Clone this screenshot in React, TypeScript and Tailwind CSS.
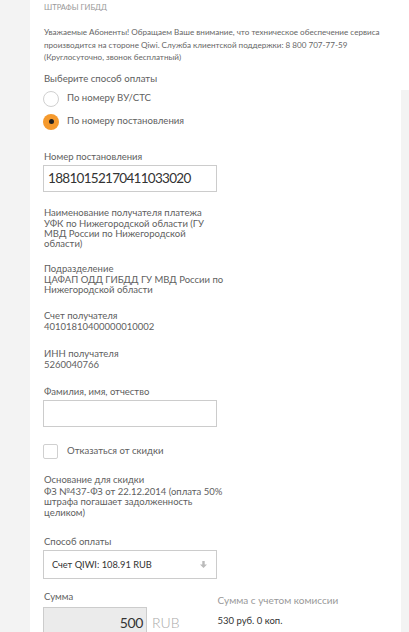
import React from 'react';

const font = { fontFamily: 'Lato, "Open Sans", sans-serif' };

const Field = ({ label, lines, lead = 'leading-[10px]', gap = 'mt-[1px]' }: { label: string; lines: string[]; lead?: string; gap?: string }) => (
  <div className="text-[9.5px] text-[#606060]">
    <div className="leading-[11px]">{label}</div>
    <div className={`${gap} ${lead} whitespace-nowrap`}>
      {lines.map((l) => (
        <div key={l}>{l}</div>
      ))}
    </div>
  </div>
);

export default function App() {
  return (
    <div className="flex h-[632px] w-[409px] overflow-hidden bg-[#f3f3f3]" style={font}>
      <div className="w-[30px] shrink-0" />
      <div className="flex flex-1 flex-col">
        <div className="bg-white pb-[4px] pl-[14px] pr-[19px]">
          <div className="text-[7.6px] uppercase leading-[14px] text-[#999]">Штрафы ГИБДД</div>
          <p className="mt-[12px] text-[8.1px] leading-[12.5px] text-[#666]">
            Уважаемые Абоненты! Обращаем Ваше внимание, что техническое обеспечение сервиса производится на стороне Qiwi. Служба клиентской поддержки: 8 800 707-77-59 (Круглосуточно, звонок бесплатный)
          </p>
          <div className="mt-[8px] text-[9.6px] leading-[14px] text-[#606060]">Выберите способ оплаты</div>
        </div>
        <div className="flex flex-1">
          <div className="flex-1 bg-white pl-[13px]">
            <div className="flex flex-col gap-[7px] pt-[1px]">
              <label className="flex h-[16px] items-center gap-[8px] text-[9.6px] text-[#606060]">
                <span className="h-[16px] w-[16px] rounded-full border border-[#d0d0d0] bg-white" />
                По номеру ВУ/СТС
              </label>
              <label className="flex h-[16px] items-center gap-[8px] text-[9.6px] text-[#606060]">
                <span className="flex h-[16px] w-[16px] items-center justify-center rounded-full bg-[#f59a2e]">
                  <span className="h-[5px] w-[5px] rounded-full bg-[#222]" />
                </span>
                По номеру постановления
              </label>
            </div>

            <div className="ml-[1px] mt-[21px] text-[9.5px] leading-[12px] text-[#606060]">Номер постановления</div>
            <div className="mt-[2px] flex h-[27px] w-[174px] items-center border border-[#ccc] pl-[4px] text-[13.5px] tracking-[-0.7px] text-[#333]">
              18810152170411033020
            </div>

            <div className="ml-[1px] mt-[15px]">
              <Field
                label="Наименование получателя платежа"
                lines={['УФК по Нижегородской области (ГУ', 'МВД России по Нижегородской', 'области)']}
              />
            </div>
            <div className="ml-[1px] mt-[14px]">
              <Field label="Подразделение" lines={['ЦАФАП ОДД ГИБДД ГУ МВД России по', 'Нижегородской области']} />
            </div>
            <div className="ml-[1px] mt-[15px]">
              <Field label="Счет получателя" lines={['40101810400000010002']} />
            </div>
            <div className="ml-[1px] mt-[16px]">
              <Field label="ИНН получателя" lines={['5260040766']} />
            </div>

            <div className="ml-[1px] mt-[16px] text-[9.5px] leading-[12px] text-[#606060]">Фамилия, имя, отчество</div>
            <div className="mt-[2px] h-[27px] w-[174px] border border-[#ccc]" />

            <label className="mt-[17px] flex h-[16px] items-center gap-[9px] text-[9.6px] text-[#606060]">
              <span className="h-[15px] w-[15px] rounded-[2px] border border-[#d0d0d0] bg-white" />
              Отказаться от скидки
            </label>

            <div className="ml-[1px] mt-[14px]">
              <Field
                label="Основание для скидки"
                lead="leading-[10.5px]"
                gap="mt-[2px]"
                lines={['ФЗ №437-ФЗ от 22.12.2014 (оплата 50%', 'штрафа погашает задолженность', 'целиком)']}
              />
            </div>

            <div className="ml-[1px] mt-[18px] text-[9.5px] leading-[12px] text-[#606060]">Способ оплаты</div>
            <div className="mt-[2px] flex h-[29px] w-[174px] items-center justify-between border border-[#ccc] pl-[8px] pr-[9px] text-[9.3px] text-[#333]">
              <span>Счет QIWI: 108.91 RUB</span>
              <svg width="7" height="7" viewBox="0 0 7 7">
                <path d="M2.3 0h2.4v3.5H7L3.5 7 0 3.5h2.3z" fill="#bbb" />
              </svg>
            </div>

            <div className="mt-[12px] flex">
              <div>
                <div className="ml-[1px] text-[9.5px] leading-[12px] text-[#606060]">Сумма</div>
                <div className="mt-[4px] flex items-center">
                  <div className="flex h-[30px] w-[104px] items-center justify-end border border-[#ccc] bg-[#ebebeb] pr-[3px] text-[14px] tracking-[-0.4px] text-[#333]">
                    500
                  </div>
                  <span className="ml-[5px] text-[14px] font-light text-[#aaa]">RUB</span>
                </div>
              </div>
              <div className="ml-[38px] pt-[3px]">
                <div className="text-[10px] leading-[12px] text-[#999]">Сумма с учетом комиссии</div>
                <div className="mt-[9px] text-[9.5px] leading-[12px] text-[#333]">530 руб. 0 коп.</div>
              </div>
            </div>
          </div>
          <div className="w-[8px] shrink-0" />
        </div>
      </div>
    </div>
  );
}
